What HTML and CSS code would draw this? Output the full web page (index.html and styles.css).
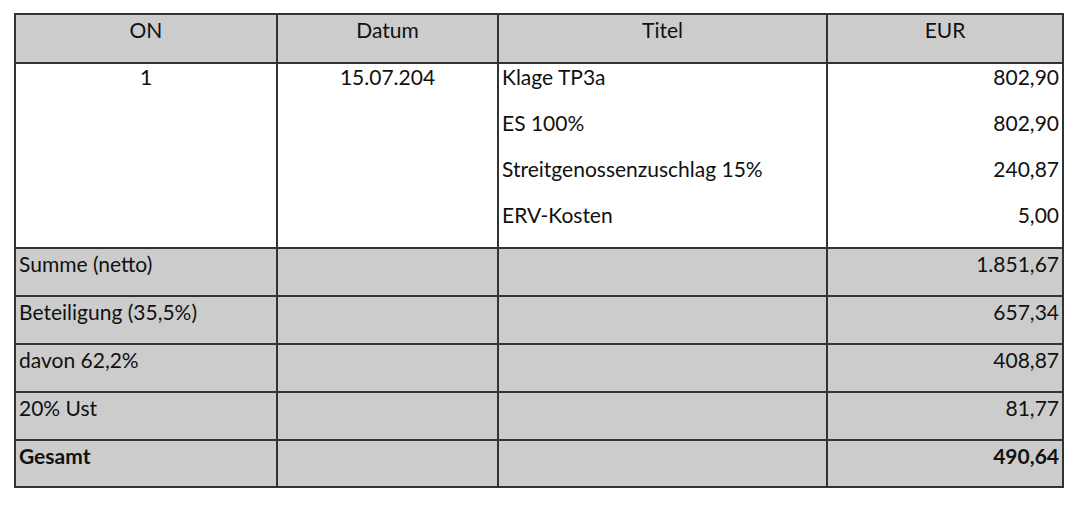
FILE: index.html
```html
<!DOCTYPE html>
<html lang="de">
<head>
<meta charset="utf-8">
<link rel="stylesheet" href="styles.css">
</head>
<body>
<table class="costs">
  <colgroup>
    <col class="c-on"><col class="c-date"><col class="c-title"><col class="c-eur">
  </colgroup>
  <thead>
    <tr class="head">
      <th>ON</th><th>Datum</th><th>Titel</th><th>EUR</th>
    </tr>
  </thead>
  <tbody>
    <tr class="items">
      <td class="center"><div class="line">1</div></td>
      <td class="center"><div class="line">15.07.204</div></td>
      <td class="title">
        <div class="line">Klage TP3a</div>
        <div class="line">ES 100%</div>
        <div class="line">Streitgenossenzuschlag 15%</div>
        <div class="line">ERV-Kosten</div>
      </td>
      <td class="num">
        <div class="line">802,90</div>
        <div class="line">802,90</div>
        <div class="line">240,87</div>
        <div class="line">5,00</div>
      </td>
    </tr>
    <tr class="sum"><td>Summe (netto)</td><td></td><td></td><td class="num">1.851,67</td></tr>
    <tr class="sum"><td>Beteiligung (35,5%)</td><td></td><td></td><td class="num">657,34</td></tr>
    <tr class="sum"><td>davon 62,2%</td><td></td><td></td><td class="num">408,87</td></tr>
    <tr class="sum"><td>20% Ust</td><td></td><td></td><td class="num">81,77</td></tr>
    <tr class="sum total"><td>Gesamt</td><td></td><td></td><td class="num">490,64</td></tr>
  </tbody>
</table>
</body>
</html>
```

FILE: styles.css
```css
html, body {
  margin: 0;
  padding: 0;
  background: #ffffff;
}
body {
  padding: 13px 18px 0 14px;
  font-family: Lato, "Liberation Sans", sans-serif;
  font-size: 21px;
  color: #111;
}
.costs {
  width: 1048px;
  border-collapse: collapse;
  table-layout: fixed;
  border: 2px solid #333;
}
.c-on { width: 262px; }
.c-date { width: 221px; }
.c-title { width: 329px; }
.c-eur { width: 236px; }
.costs th, .costs td {
  border: 2px solid #333;
  vertical-align: top;
  padding: 5px 3px 0 3px;
  line-height: 23px;
}
.head th {
  background: #cccccc;
  font-weight: normal;
  height: 44px;
  padding-top: 3px;
}
.items td {
  background: #ffffff;
  padding-top: 1px;
  padding-bottom: 0;
}
.items .line {
  height: 46px;
}
.items .line:last-child {
  height: 44px;
}
.items td.center .line:last-child {
  height: 23px;
}
.center { text-align: center; }
.num { text-align: right; }
.sum td {
  background: #cccccc;
  height: 43px;
  padding-top: 3px;
}
.sum.total td {
  height: 42px;
}
.total td { font-weight: bold; }
```
